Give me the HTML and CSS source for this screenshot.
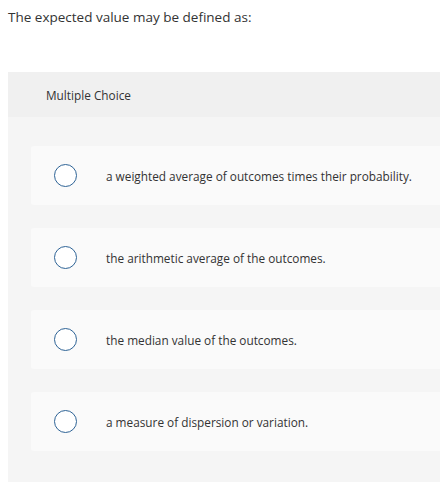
FILE: index.html
```html
<!DOCTYPE html>
<html>
<head>
<meta charset="utf-8">
<link rel="stylesheet" href="styles.css">
</head>
<body>
<p class="question">The expected value may be defined as:</p>
<section class="panel">
  <div class="panel-header">Multiple Choice</div>
  <div class="options">
    <label class="option"><span class="radio"></span><span class="opt-text">a weighted average of outcomes times their probability.</span></label>
    <label class="option"><span class="radio"></span><span class="opt-text">the arithmetic average of the outcomes.</span></label>
    <label class="option"><span class="radio"></span><span class="opt-text">the median value of the outcomes.</span></label>
    <label class="option"><span class="radio"></span><span class="opt-text">a measure of dispersion or variation.</span></label>
  </div>
</section>
</body>
</html>
```
FILE: styles.css
```css
html, body {
  margin: 0;
  padding: 0;
  background: #ffffff;
  font-family: "Open Sans", "Liberation Sans", sans-serif;
  color: #333333;
  overflow: hidden;
}
.question {
  margin: 0;
  padding: 8px 0 0 8px;
  height: 72px;
  box-sizing: border-box;
  font-size: 13.5px;
  line-height: 18px;
}
.panel {
  margin-left: 8px;
  background: #f5f5f5;
  padding-bottom: 32px;
}
.panel-header {
  background: #f0f0f0;
  height: 45px;
  box-sizing: border-box;
  padding-left: 38px;
  display: flex;
  align-items: center;
  font-size: 11.8px;
}
.options {
  display: flex;
  flex-direction: column;
  gap: 23px;
  padding: 29px 0 0 23px;
}
.option {
  display: flex;
  align-items: center;
  height: 59px;
  background: #fafafa;
  border-radius: 3px 0 0 3px;
  padding-left: 23px;
}
.radio {
  width: 21px;
  height: 21px;
  border: 1.5px solid #2e6396;
  border-radius: 50%;
  background: #ffffff;
  flex: none;
}
.opt-text {
  margin-left: 29px;
  font-size: 11.8px;
}
```
